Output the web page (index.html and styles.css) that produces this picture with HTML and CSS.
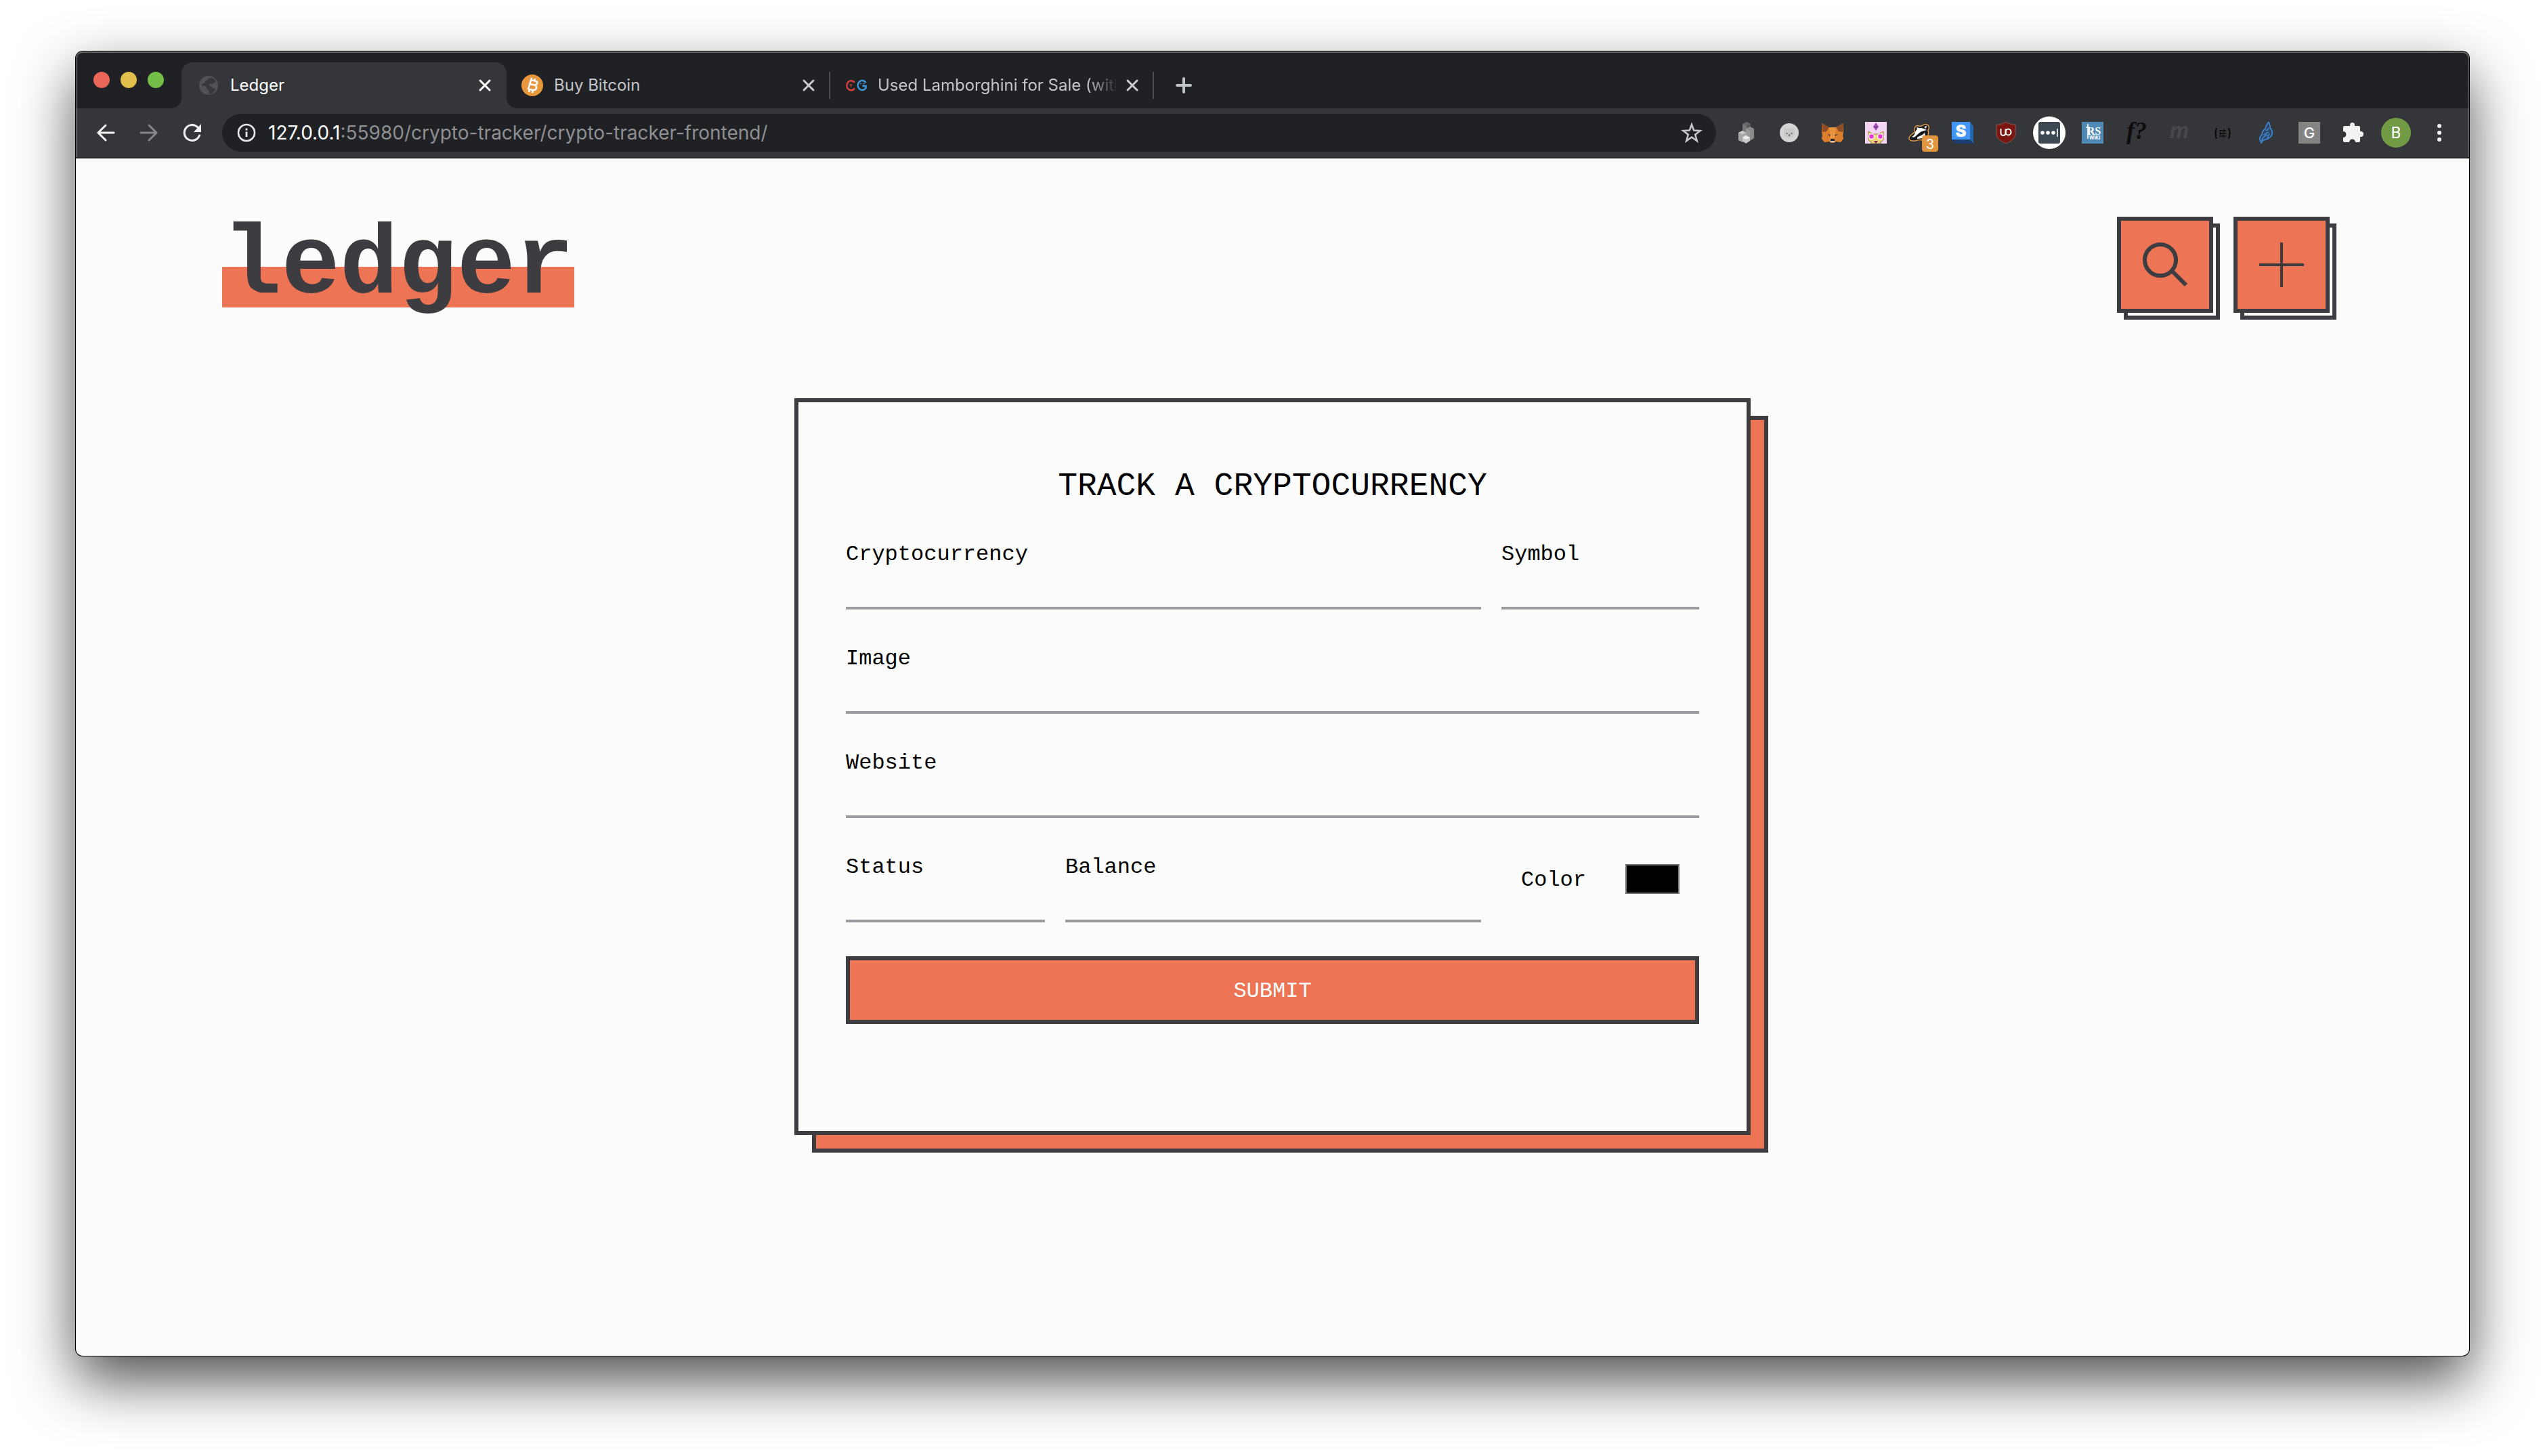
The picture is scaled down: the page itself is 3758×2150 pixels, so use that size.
FILE: index.html
```html
<!DOCTYPE html>
<html lang="en">
<head>
<meta charset="utf-8">
<title>Ledger</title>
<link rel="stylesheet" href="styles.css">
</head>
<body>
<div class="window">
  <div class="tabstrip">
    <div class="lights"><span class="light light-red"></span><span class="light light-yellow"></span><span class="light light-green"></span></div>
    <div class="tab tab-active">
      <svg class="icon" viewBox="0 0 32 32"><circle cx="16" cy="16" r="14" fill="#505256"/><path d="M19 5c-5 0-2 3-6 4s-1 4-4 4-4 2-3 4c2 1 4-1 6 1s0 4 3 5 1 4 2 6c5 0 8-4 9-8-2-1-4 0-5-2s-3-1-4-3 2-3 4-2c3 1 2-3 6-2-1-4-4-7-8-7z" fill="#37383c"/></svg>
      <a class="tab-title" href="#">Ledger</a>
      <button class="icon-button" aria-label="Close Ledger"><svg class="icon" viewBox="0 0 32 32"><path d="M9 9l14 14M23 9L9 23" stroke="#fff" stroke-width="3" stroke-linecap="round"/></svg></button>
    </div>
    <div class="tab">
      <svg class="icon" viewBox="0 0 32 32"><circle cx="16" cy="16" r="16" fill="#e9973d"/><path d="M13 8l7 1.500c5 1 4 6-1 6l-6-1.200m6 1.200c5 1 4 8-2 7.500l-7-1.500M14 8l-4 14M15 5l-1 4M20 6l-1 4M12 22l-1 4M17 23l-1 4" fill="none" stroke="#fff" stroke-width="2.600"/></svg>
      <a class="tab-title" href="#">Buy Bitcoin</a>
      <button class="icon-button" aria-label="Close Buy Bitcoin"><svg class="icon" viewBox="0 0 32 32"><path d="M9 9l14 14M23 9L9 23" stroke="#c9cbcf" stroke-width="3" stroke-linecap="round"/></svg></button>
      <span class="separator"></span>
    </div>
    <div class="tab">
      <svg class="icon" viewBox="0 0 32 32"><path d="M14 12A6.500 7 0 1 0 14 20.500" fill="none" stroke="#d9413f" stroke-width="2.400"/><path d="M6 15h5M8.500 15v4" stroke="#d9413f" stroke-width="1.200"/><path d="M30.500 12A6.500 7 0 1 0 30.500 20v-3h-5" fill="none" stroke="#3f9bdc" stroke-width="2.400"/><path d="M22 13.500h2M26.500 13.500h2" stroke="#3f9bdc" stroke-width="1.600"/></svg>
      <a class="tab-title tab-title-faded" href="#">Used Lamborghini for Sale (with</a>
      <button class="icon-button" aria-label="Close Used Lamborghini for Sale"><svg class="icon" viewBox="0 0 32 32"><path d="M9 9l14 14M23 9L9 23" stroke="#c9cbcf" stroke-width="3" stroke-linecap="round"/></svg></button>
      <span class="separator"></span>
    </div>
    <button class="icon-button new-tab" aria-label="New tab"><svg class="icon" viewBox="0 0 32 32"><path d="M16 6v20M6 16h20" stroke="#bfc4cb" stroke-width="4" stroke-linecap="round"/></svg></button>
  </div>

  <div class="toolbar">
    <button class="nav-button" aria-label="Back"><svg class="icon" viewBox="0 0 32 32"><path d="M28 16H5M16 5L5 16l11 11" fill="none" stroke="#f1f3f4" stroke-width="3" stroke-linecap="round"/></svg></button>
    <button class="nav-button" aria-label="Forward"><svg class="icon" viewBox="0 0 32 32"><path d="M4 16h23M16 5l11 11-11 11" fill="none" stroke="#85868a" stroke-width="3" stroke-linecap="round"/></svg></button>
    <button class="nav-button" aria-label="Reload"><svg class="icon" viewBox="0 0 32 32"><path d="M26.500 20A11.500 11.500 0 1 1 24 8" fill="none" stroke="#f1f3f4" stroke-width="3" stroke-linecap="round"/><path d="M29 3v12H18z" fill="#f1f3f4"/></svg></button>
    <div class="omnibox">
      <svg class="info" viewBox="0 0 28 28"><circle cx="14" cy="14" r="12" fill="none" stroke="#e8eaed" stroke-width="2.600"/><path d="M14 12.500v7.500M14 7.500v3" stroke="#e8eaed" stroke-width="2.800"/></svg>
      <div class="url"><span class="host">127.0.0.1</span>:55980/crypto-tracker/crypto-tracker-frontend/</div>
      <button class="icon-button" aria-label="Bookmark"><svg class="icon" viewBox="0 0 32 32"><path d="M16 4l3.200 8.500 9.300.5-7.300 5.700L23.800 28 16 22.500 8.200 28l2.600-9.300L3.500 13l9.300-.5z" fill="none" stroke="#c4c6c9" stroke-width="2.600"/></svg></button>
    </div>
    <div class="extensions">
      <svg class="icon" viewBox="0 0 32 32"><path d="M11 3l6-3 6 3v8h-6z" fill="#555"/><path d="M11 3l6 3 6-3-6-3z" fill="#666"/><path d="M11 3v16l6 2V6z" fill="#777"/><path d="M16 10l6-3 6 3v14l-6 4-6-3z" fill="#8b8b8b"/><path d="M16 10l6 3v15l-6-3z" fill="#999"/><path d="M5 16l6-3 6 3v10l-6 4-6-3z" fill="#a8a8a8"/><path d="M5 16l6 2 5-2-5-3z" fill="#ccc"/><path d="M11 23l5-3 6 3v5l-6 4-5-4z" fill="#c9c9c9"/><path d="M11 23l5-3 6 3-6 3z" fill="#eee"/></svg>
      <svg class="icon" viewBox="0 0 32 32"><circle cx="16" cy="16" r="14" fill="#d4d4d4"/><path d="M9 8l4 2h6l4-2 1 9c0 9-16 9-16 0z" fill="#c8c8c8"/><circle cx="12.500" cy="17" r="1" fill="#555"/><circle cx="19.500" cy="17" r="1" fill="#555"/><circle cx="16" cy="19.500" r="1.200" fill="#555"/></svg>
      <svg class="icon" viewBox="0 0 32 32"><path d="M0 2l11 6h10l11-6v13l-1 4 1 6-4 5-7-1-3 2h-4l-3-2-7 1-4-5 1-6-1-4z" fill="#dd7f2c"/><path d="M0 2l11 6-4 6-6 1zM32 2l-11 6 4 6 6 1z" fill="#8f4d25"/><path d="M11 8h10l-2 18h-6z" fill="#e8943f"/><path d="M8 18l5 1-1 2zM24 18l-5 1 1 2z" fill="#3c3b45"/><path d="M12 25h8l-1 5h-6z" fill="#d5c3b5"/><path d="M13 25h6v3h-6z" fill="#222"/></svg>
      <svg class="icon" viewBox="0 0 32 32"><path fill="#f3d4f5" d="M0 0h32v32H0z"/><path d="M16 1l4 6-4 6-4-6z" fill="#a04bb0"/><path d="M12 7h8l-4 2z" fill="#6f2c84"/><path d="M5 14l7 4h8l7-4v11c0 3-2 4-4 4v3H9v-3c-2 0-4-1-4-4z" fill="#ecd47c" stroke="#9b8244"/><circle cx="9.500" cy="21.500" r="4.500" fill="#fff"/><circle cx="22.500" cy="21.500" r="4.500" fill="#fff"/><circle cx="9.500" cy="21.500" r="3.200" fill="#e733d4"/><circle cx="22.500" cy="21.500" r="3.200" fill="#e733d4"/><path d="M13 28h6l-3 4z" fill="#7a2553"/></svg>
      <div class="badged">
        <svg class="icon" viewBox="0 0 32 32"><path d="M1 24c0-4 5-6 8-9 0-3-1-8 3-9 3-1 4 1 7 0s4-3 8-2 4 6 2 8c1 4 0 10-3 14-6 2-11-1-15 2H6c-3 0-5-2-5-4z" fill="#17181b" stroke="#e39a4a" stroke-width="1.500"/><path d="M11 13c3-5 9-5 16-1l-7 2c-4 1-7 6-12 9l-3-1c5-3 4-5 6-9zM12 8l4 1-3 2zM23 7l4-1-1 4zM13 23c4-3 8-3 11-7l1 5c-3 4-7 3-12 4z" fill="#fff"/></svg>
        <span class="badge">3</span>
      </div>
      <svg class="icon" viewBox="0 0 32 32"><path fill="#4297f8" d="M0 0h27v26H0z"/><path d="M27 0l5 6v26l-5-6z" fill="#2565a8"/><path d="M0 26h27l5 6H6z" fill="#183f70"/><text class="ext-s" x="13.500" y="22" text-anchor="middle">S</text></svg>
      <svg class="icon" viewBox="0 0 32 32"><path d="M16 0c4 3 9 4 14 4v14c0 7-8 11-14 14C10 29 2 25 2 18V4c5 0 10-1 14-4z" fill="#7b150f" stroke="#8a5956"/><path d="M8.500 10v6.500a3.500 3.500 0 0 0 7 0V10" fill="none" stroke="#fff" stroke-width="2"/><ellipse cx="19.500" cy="15" rx="4" ry="4.500" fill="none" stroke="#fff" stroke-width="2"/></svg>
      <span class="halo"><svg class="icon" viewBox="0 0 32 32"><rect width="32" height="32" rx="3" fill="#3d4853"/><circle cx="6" cy="16" r="2.800" fill="#fff"/><circle cx="14" cy="16" r="2.800" fill="#fff"/><circle cx="22" cy="16" r="2.800" fill="#fff"/><path d="M28 10v12" stroke="#fff" stroke-width="1.500"/></svg></span>
      <svg class="icon" viewBox="0 0 32 32"><path fill="#5189b5" d="M0 0h32v32H0z"/><text class="ext-rs" x="18" y="19" text-anchor="middle">RS</text><text class="ext-wiki" x="19" y="26" text-anchor="middle">WIKI</text><path d="M9 3v22M6 8h6" stroke="#fff" stroke-width="1.600"/></svg>
      <svg class="icon overflow" viewBox="0 0 32 32"><text class="ext-f" x="17" y="25" text-anchor="middle">f?</text></svg>
      <svg class="icon overflow" viewBox="0 0 32 32"><text class="ext-m" x="16" y="24" text-anchor="middle">m</text></svg>
      <svg class="icon" viewBox="0 0 32 32"><path d="M8 10c-3 0-2 2-2 4s-1 3-2 3c1 0 2 1 2 3s-1 4 2 4M24 10c3 0 2 2 2 4s1 3 2 3c-1 0-2 1-2 3s1 4-2 4" fill="none" stroke="#0c0c0d" stroke-width="2"/><path d="M11 13h10M11 17h10M11 21h10M18 11v4M13 15v4M17 19v4" fill="none" stroke="#0c0c0d" stroke-width="1.500"/></svg>
      <svg class="icon" viewBox="0 0 32 32"><path d="M9 31c-3-5-3-9 1-12 0-5 2-7 5-9 1-4 2-7 5-10 1 3 3 6 2 9 5 5 4 12-2 15-2 2-6 2-8 3z" fill="#2b4460" stroke="#3f83cd" stroke-width="1.800"/><path d="M10 28c0-6 5-7 8-9M12 19c4 0 4-3 8-4M15 12c2 1 4 0 5-3M18 24l3-7" fill="none" stroke="#3f83cd" stroke-width="1.800"/></svg>
      <svg class="icon" viewBox="0 0 32 32"><path fill="#848484" d="M0 0h32v32H0z"/><text class="ext-g" x="16" y="24" text-anchor="middle">G</text></svg>
      <svg class="icon" viewBox="0 0 32 32"><path d="M4 6h8V4.500a3.500 3.500 0 0 1 7 0V6h6a2 2 0 0 1 2 2v6h1a4 4 0 0 1 0 8h-1v6a2 2 0 0 1-2 2h-5a4.500 4.500 0 0 0-9 0H4a2 2 0 0 1-2-2v-5a4.500 4.500 0 0 0 0-9V8a2 2 0 0 1 2-2z" fill="#f1f3f4"/></svg>
    </div>
    <button class="avatar" aria-label="Profile">B</button>
    <button class="icon-button" aria-label="Menu"><svg class="icon" viewBox="0 0 32 32" fill="#f1f3f4"><circle cx="16" cy="6" r="3"/><circle cx="16" cy="16" r="3"/><circle cx="16" cy="26" r="3"/></svg></button>
  </div>

  <main class="page">
    <header class="masthead">
      <h1 class="logo">ledger</h1>
      <div class="actions">
        <button class="square" aria-label="Search"><svg class="glyph" viewBox="0 0 66 66"><circle cx="26" cy="26" r="23" fill="none" stroke="#3c3c41" stroke-width="6"/><path d="M43 42l21 21" stroke="#3c3c41" stroke-width="6"/></svg></button>
        <button class="square" aria-label="Add"><svg class="glyph" viewBox="0 0 66 66"><path d="M33 0v66M0 33h66" stroke="#3c3c41" stroke-width="4"/></svg></button>
      </div>
    </header>
    <form class="card">
      <h2 class="card-title">TRACK A CRYPTOCURRENCY</h2>
      <div class="fields">
        <div class="field span-two"><label for="name">Cryptocurrency</label><input id="name" type="text"></div>
        <div class="field"><label for="symbol">Symbol</label><input id="symbol" type="text"></div>
        <div class="field span-all"><label for="image">Image</label><input id="image" type="text"></div>
        <div class="field span-all"><label for="website">Website</label><input id="website" type="text"></div>
        <div class="field"><label for="status">Status</label><input id="status" type="text"></div>
        <div class="field"><label for="balance">Balance</label><input id="balance" type="text"></div>
        <div class="color-field"><label for="color">Color</label><input id="color" type="color" value="#000000"></div>
      </div>
      <button class="submit" type="button">SUBMIT</button>
    </form>
  </main>
</div>
</body>
</html>
```
FILE: styles.css
```css
* { box-sizing: border-box; }

body {
  margin: 0;
  padding: 76px 112px 148px;
  background: #fff;
  font-family: Inter, "Noto Sans", sans-serif;
}

button { padding: 0; border: 0; background: none; font: inherit; color: inherit; }
a { color: inherit; text-decoration: none; }
svg { display: block; flex: none; }

.window {
  display: flex;
  flex-direction: column;
  min-height: calc(100vh - 224px);
  overflow: hidden;
  border-radius: 10px;
  background: #fcfcfc;
  box-shadow: 0 0 0 1px #000, 0 36px 86px rgba(0, 0, 0, 0.7);
}

.icon { width: 32px; height: 32px; }
.overflow { overflow: visible; }
.icon-button { flex: none; width: 32px; height: 32px; }

/* Tab strip */
.tabstrip {
  display: flex;
  height: 84px;
  padding-left: 26px;
  border-radius: 10px 10px 0 0;
  background: #202124;
  box-shadow: inset 0 2px 0 #656866, inset 2px 0 0 #4c4d50, inset -2px 0 0 #4c4d50;
}
.lights { display: flex; align-items: center; gap: 16px; margin-right: 26px; }
.light { width: 24px; height: 24px; border-radius: 50%; }
.light-red { background: #ec6559; }
.light-yellow { background: #e0bf4c; }
.light-green { background: #72be47; }

.tab {
  position: relative;
  display: flex;
  align-items: center;
  width: 478px;
  height: 68px;
  margin-top: 16px;
  padding-left: 22px;
  color: #c3c5c9;
  font-size: 24px;
  line-height: 32px;
}
.tab-active {
  width: 480px;
  padding: 0 16px 0 24px;
  border-radius: 16px 16px 0 0;
  background: #35363a;
  color: #fff;
}
.tab-active::before,
.tab-active::after {
  content: "";
  position: absolute;
  bottom: 0;
  width: 16px;
  height: 16px;
}
.tab-active::before { right: 100%; background: radial-gradient(circle at 0 0, transparent 16px, #35363a 16px); }
.tab-active::after { left: 100%; background: radial-gradient(circle at 100% 0, transparent 16px, #35363a 16px); }
.tab-title { flex: 1; min-width: 0; margin: 0 8px 0 16px; overflow: hidden; white-space: nowrap; }
.tab-title-faded { mask-image: linear-gradient(to right, #000 310px, transparent 356px); }
.separator { width: 2px; height: 40px; margin-left: 14px; background: #4a4c50; }
.new-tab { align-self: center; margin: 16px 0 0 28px; }

/* Toolbar */
.toolbar {
  display: flex;
  align-items: center;
  height: 74px;
  padding: 0 28px 0 20px;
  border-bottom: 2px solid #28292c;
  background: #35363a;
  box-shadow: inset 2px 0 0 #5c5d60, inset -2px 0 0 #5c5d60;
}
.nav-button {
  display: flex;
  align-items: center;
  justify-content: center;
  width: 48px;
  height: 48px;
  margin-right: 16px;
}
.omnibox {
  display: flex;
  flex: 1;
  align-items: center;
  height: 56px;
  margin: 0 28px 0 4px;
  padding: 0 20px 0 22px;
  border-radius: 28px;
  background: #202124;
}
.info { width: 28px; height: 28px; }
.url { flex: 1; margin-left: 18px; color: #8e8f92; font-size: 28px; line-height: 36px; white-space: nowrap; }
.host { color: #fff; }

.extensions { display: flex; align-items: center; gap: 32px; }
.badged { position: relative; }
.badge {
  position: absolute;
  top: 20px;
  left: 20px;
  width: 24px;
  height: 24px;
  border-radius: 4px;
  background: #e1953f;
  color: #fff;
  font-size: 20px;
  line-height: 26px;
  text-align: center;
}
.halo {
  display: flex;
  align-items: center;
  justify-content: center;
  width: 48px;
  height: 48px;
  margin: 0 -8px;
  border-radius: 50%;
  background: #fff;
}
.ext-s { fill: #fff; font-size: 24px; font-weight: 900; }
.ext-rs { fill: #fff; font: bold 16px "Liberation Serif", serif; }
.ext-wiki { fill: #fff; font-size: 7px; font-weight: 700; }
.ext-f { fill: #0c0c0d; font: italic bold 36px "Liberation Serif", serif; }
.ext-m { fill: #47484b; font: italic bold 32px "Open Sans", sans-serif; }
.ext-g { fill: #fff; font-size: 22px; font-weight: 500; }
.avatar {
  flex: none;
  width: 44px;
  height: 44px;
  margin: 0 26px;
  border-radius: 50%;
  background: #719c45;
  color: #fff;
  font-family: Roboto, sans-serif;
  font-size: 24px;
}

/* Page */
.page {
  flex: 1;
  padding: 86px 206px 126px;
  color: #000;
  font-family: "Liberation Mono", monospace;
  font-size: 32px;
  line-height: 42px;
}
.masthead { display: flex; align-items: center; justify-content: space-between; padding-left: 10px; }
.logo {
  margin: 0;
  padding: 5px 1px 0;
  background: linear-gradient(transparent 66px, #ed7454 66px);
  color: #3c3c41;
  font-size: 144px;
  font-weight: 700;
  line-height: 121px;
}
.actions { display: flex; gap: 30px; }
.square {
  display: flex;
  align-items: center;
  justify-content: center;
  width: 142px;
  height: 142px;
  border: 6px solid #3c3c41;
  background: #ed7454;
  box-shadow: 10px 10px 0 -6px #fcfcfc, 10px 10px 0 0 #3c3c41;
}
.glyph { width: 66px; height: 66px; }

.card {
  max-width: 1412px;
  margin: 126px auto 0;
  padding: 92px 70px 158px;
  border: 6px solid #3c3c41;
  background: #fcfcfc;
  box-shadow: 26px 26px 0 -6px #ed7454, 26px 26px 0 0 #3c3c41;
}
.card-title { margin: 0 0 48px; font-size: 48px; font-weight: 400; line-height: 64px; text-align: center; }
.fields {
  display: grid;
  grid-template-columns: 294fr 614fr 292fr;
  gap: 52px 30px;
}
.field { display: flex; flex-direction: column; }
.field input {
  width: 100%;
  height: 60px;
  padding: 0;
  border: 0;
  border-bottom: 4px solid #9b9b9f;
  background: none;
  font: inherit;
}
.span-two { grid-column: span 2; }
.span-all { grid-column: 1 / -1; }
.color-field { display: flex; align-items: center; justify-content: space-around; height: 76px; }
.color-field label { padding-top: 4px; }
.color-field input {
  appearance: none;
  width: 80px;
  height: 44px;
  padding: 0;
  border: 2px solid #767676;
  background: #000;
}
.color-field input::-webkit-color-swatch-wrapper { padding: 0; }
.color-field input::-webkit-color-swatch { border: 0; }
.submit {
  display: block;
  width: 100%;
  height: 100px;
  margin-top: 50px;
  padding-top: 4px;
  border: 6px solid #3c3c41;
  background: #ed7454;
  color: #fff;
}
```
